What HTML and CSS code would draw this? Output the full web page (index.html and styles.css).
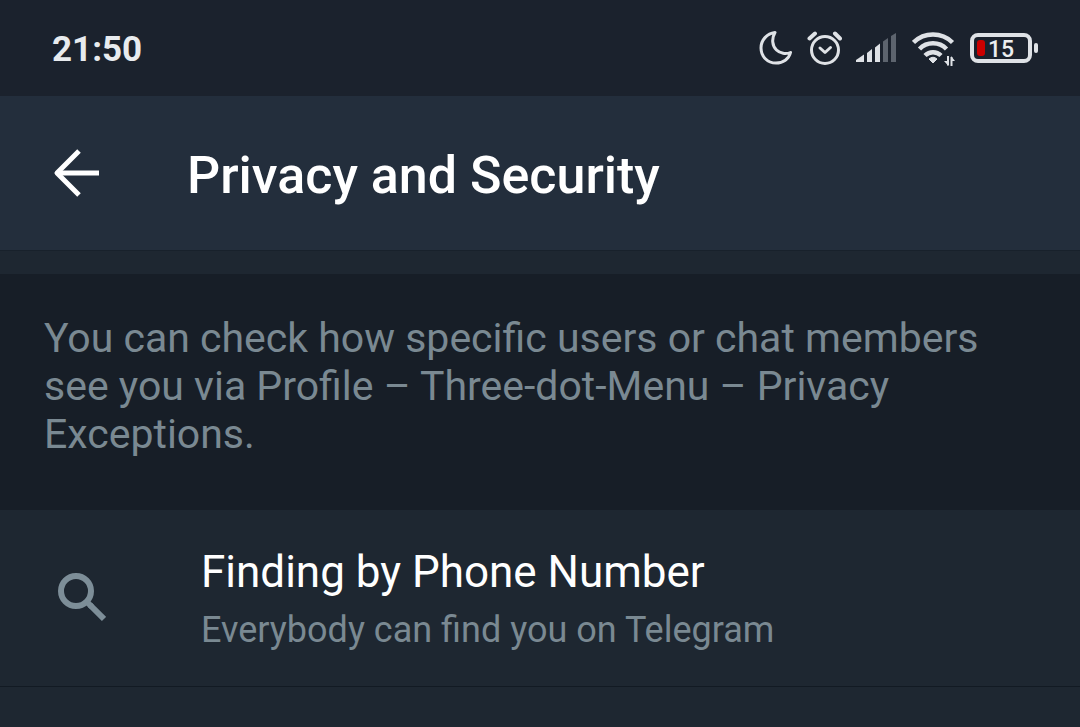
FILE: index.html
```
<!DOCTYPE html>
<html lang="en">
<head>
    <meta charset="UTF-8">
    <meta name="viewport" content="width=device-width, initial-scale=1.0">
    <title>Privacy and Security</title>
    <link rel="stylesheet" href="styles.css">
</head>
<body>
    <div class="status-bar">
        <span class="clock">21:50</span>
        <div class="status-icons">
            <!-- do not disturb -->
            <svg width="34" height="36" viewBox="0 0 34 36" fill="none" stroke="#dfe2e6" stroke-width="3" stroke-linejoin="round">
                <path d="M17 2.500C9 3.500 3 10 3 18C3 26.500 9.500 33 18 33C25 33 31 29 32.500 22.500C28 24.500 22 23.500 18.500 20C14 15.500 13.500 8.500 17 2.500Z"/>
            </svg>
            <!-- alarm -->
            <svg width="36" height="36" viewBox="0 0 36 36" fill="none" stroke="#dfe2e6" stroke-width="3">
                <circle cx="19" cy="20" r="13.500"/>
                <path d="M14 18L19 22.500L24.500 17.500" stroke-linecap="round" stroke-linejoin="round"/>
                <path d="M3.500 8.500L9 3.500M29 3.500L34 8.500" stroke-width="4" stroke-linecap="round"/>
            </svg>
            <!-- mobile signal -->
            <svg width="42" height="36" viewBox="0 0 42 36">
                <g fill="#dfe2e6">
                    <path d="M0 30L8 24.500V32H0Z"/>
                    <path d="M11 23L16 19V32H11Z"/>
                    <path d="M19 17.500L24 13.500V32H19Z"/>
                </g>
                <g fill="#5d646e">
                    <path d="M27 11.500L32 8V32H27Z"/>
                    <path d="M35 6L40 3V32H35Z"/>
                </g>
            </svg>
            <!-- wifi -->
            <svg width="44" height="36" viewBox="0 0 44 36" fill="none" stroke="#dfe2e6" stroke-width="4.500">
                <path d="M1.500 12.500A28 28 0 0 1 40.500 12.500"/>
                <path d="M7.500 19A19 19 0 0 1 34.500 19"/>
                <path d="M13 25.500A11.500 11.500 0 0 1 29 25.500"/>
                <path d="M17 29Q21 25.500 25 29L21 33Z" fill="#dfe2e6" stroke-width="1" stroke-linejoin="round"/>
                <path d="M36 26V35.500M39.500 36V27" stroke-width="2"/>
                <path d="M32 31H36V35.500ZM43 31H39V26Z" fill="#dfe2e6" stroke="none"/>
            </svg>
            <!-- battery -->
            <div class="battery">
                <div class="battery-body">
                    <span class="battery-level"></span>
                    <span class="battery-text">15</span>
                </div>
                <span class="battery-tip"></span>
            </div>
        </div>
    </div>

    <header class="header">
        <button class="back-button" aria-label="Back">
            <svg width="48" height="48" viewBox="0 0 48 48" fill="none" stroke="#ffffff" stroke-width="5">
                <path d="M27 2L5 24L27 46" stroke-linejoin="round"/>
                <path d="M5 24H47"/>
            </svg>
        </button>
        <h1>Privacy and Security</h1>
    </header>

    <main>
        <div class="divider-strip"></div>
        <p class="hint">You can check how specific users or chat members see you via Profile – Three-dot-Menu – Privacy Exceptions.</p>
        <button class="setting">
            <svg width="48" height="50" viewBox="0 0 48 50" fill="none" stroke="#7d8e98">
                <circle cx="18" cy="18" r="15" stroke-width="6"/>
                <path d="M32 32L46 46" stroke-width="6"/>
                <path d="M31.500 31.500L33 33" stroke-width="6" stroke-linecap="round"/>
            </svg>
            <span class="setting-text">
                <span class="setting-title">Finding by Phone Number</span>
                <span class="setting-value">Everybody can find you on Telegram</span>
            </span>
        </button>
    </main>
</body>
</html>
```

FILE: styles.css
```
* {
    box-sizing: border-box;
}
body {
    margin: 0;
    min-height: 100vh;
    background-color: #1e2731;
    color: #ffffff;
    font-family: Roboto, "Liberation Sans", sans-serif;
}
button {
    border: none;
    padding: 0;
    background: none;
    color: inherit;
    font-family: inherit;
    cursor: pointer;
}
svg {
    display: block;
    flex-shrink: 0;
}

/* Status bar */
.status-bar {
    display: flex;
    align-items: center;
    justify-content: space-between;
    height: 96px;
    padding: 0 42px 0 52px;
    background-color: #1b222d;
}
.clock {
    padding-top: 4px;
    color: #e8ebee;
    font-size: 35px;
    font-weight: 700;
    line-height: 40px;
}
.status-icons {
    display: flex;
    align-items: center;
    gap: 14px;
}
.battery {
    display: flex;
    align-items: center;
    gap: 2px;
}
.battery-body {
    display: flex;
    align-items: center;
    gap: 3px;
    width: 62px;
    height: 30px;
    padding-left: 3px;
    border: 4px solid #dfe2e6;
    border-radius: 8px;
}
.battery-level {
    width: 8px;
    height: 16px;
    border-radius: 3px;
    background-color: #cc0000;
}
.battery-text {
    padding-top: 4px;
    color: #eceef0;
    font-size: 23px;
    font-weight: 500;
    line-height: 24px;
}
.battery-tip {
    width: 4px;
    height: 10px;
    border-radius: 2px;
    background-color: #dfe2e6;
}

/* Header */
.header {
    display: flex;
    align-items: center;
    gap: 87px;
    height: 155px;
    padding: 0 52px;
    background-color: #232e3c;
    border-bottom: 1px solid #18212b;
}
h1 {
    margin: 0;
    padding-top: 6px;
    font-size: 52px;
    font-weight: 500;
    line-height: 60px;
}

/* Settings */
.divider-strip {
    height: 23px;
}
.hint {
    margin: 0;
    padding: 40px 44px 52px;
    background-color: #171e27;
    color: #7a8992;
    font-size: 41px;
    line-height: 48px;
}
.setting {
    display: flex;
    align-items: center;
    gap: 95px;
    width: 100%;
    height: 177px;
    padding: 0 58px;
    border-bottom: 1px solid #121a23;
    text-align: left;
}
.setting-text {
    display: flex;
    flex-direction: column;
    gap: 10px;
    padding-top: 2px;
}
.setting-title {
    font-size: 44px;
    line-height: 52px;
}
.setting-value {
    color: #7a8992;
    font-size: 36px;
    line-height: 44px;
}
```
